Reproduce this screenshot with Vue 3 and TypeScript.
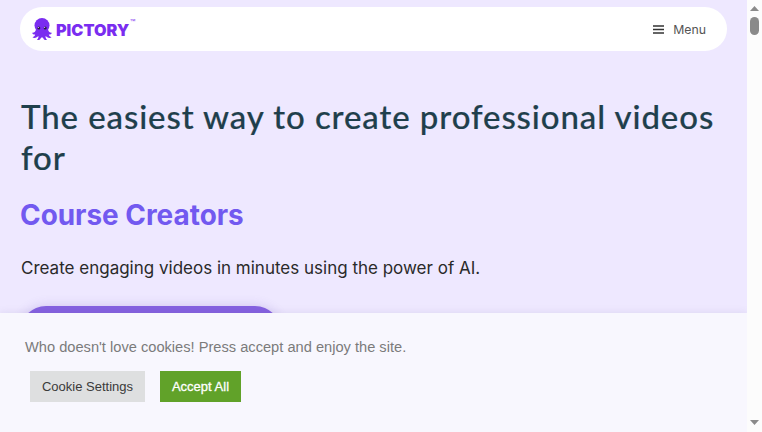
<script setup lang="ts">
const menuLabel = "Menu";
</script>

<template>
  <div class="page">
    <main class="content">
      <header class="navbar">
        <div class="logo">
          <svg class="octopus" viewBox="0 0 20 23" width="20" height="23">
            <circle cx="10" cy="7.500" r="7.500" fill="#7a2df0" />
            <path
              d="M4 11c-.2 2.500-1.500 3.800-3.800 3.700.1 1.200 1.500 2 3 1.700-.3 1.300-1.300 2.300-2.700 2.800.9 1.100 3 1 4.200 0 .8-.7 1.300-1 1.900-1-.1 1.500-.7 2.800-1.700 3.600 1.400.6 3.100-.1 3.700-1.400.3-.7.600-.9 1.400-.9s1.100.2 1.400.9c.6 1.300 2.300 2 3.700 1.400-1-.8-1.600-2.100-1.700-3.600.6 0 1.100.3 1.900 1 1.200 1 3.300 1.100 4.200 0-1.400-.5-2.400-1.500-2.700-2.800 1.500.3 2.900-.5 3-1.700-2.300.1-3.600-1.200-3.800-3.700z"
              fill="#7a2df0"
            />
            <circle cx="6.800" cy="10" r="1.500" fill="#2a1a4a" />
            <circle cx="13.200" cy="10" r="1.500" fill="#2a1a4a" />
            <circle cx="6.300" cy="9.500" r="0.500" fill="#fff" />
            <circle cx="12.700" cy="9.500" r="0.500" fill="#fff" />
          </svg>
          <span class="logo-text">PICTORY</span>
          <span class="logo-tm">™</span>
        </div>
        <button class="menu-button">
          <svg class="menu-icon" viewBox="0 0 11 9" width="11" height="9">
            <path d="M0 1h11M0 4.500h11M0 8h11" stroke="#333" stroke-width="1.500" />
          </svg>
          <span>{{ menuLabel }}</span>
        </button>
      </header>

      <section class="hero">
        <h1>The easiest way to create professional videos for</h1>
        <h2>Course Creators</h2>
        <p>Create engaging videos in minutes using the power of AI.</p>
        <div class="cta" />
      </section>

      <div class="cookie-bar">
        <p>Who doesn't love cookies! Press accept and enjoy the site.</p>
        <div class="cookie-actions">
          <button class="btn-settings">Cookie Settings</button>
          <button class="btn-accept">Accept All</button>
        </div>
      </div>
    </main>

    <aside class="scrollbar">
      <svg class="arrow" viewBox="0 0 9 5" width="9" height="5"><path d="M4.500 0L9 5H0z" fill="#8a8a8a" /></svg>
      <div class="thumb" />
      <svg class="arrow arrow-down" viewBox="0 0 9 5" width="9" height="5"><path d="M0 0h9L4.500 5z" fill="#8a8a8a" /></svg>
    </aside>
  </div>
</template>

<style scoped>
.page {
  display: flex;
  width: 762px;
  height: 432px;
  overflow: hidden;
}

.content {
  position: relative;
  width: 747px;
  height: 432px;
  box-sizing: border-box;
  padding: 7px 20px 0;
  background-color: #eee8ff;
  overflow: hidden;
}

.navbar {
  display: flex;
  justify-content: space-between;
  align-items: center;
  height: 44px;
  padding: 0 21px 0 12px;
  background-color: #fff;
  border-radius: 22px;
}

.logo {
  display: flex;
  align-items: center;
}

.logo-text {
  margin: 2px 0 0 4px;
  font-family: "Inter", sans-serif;
  font-size: 16.200px;
  font-weight: 900;
  line-height: 14px;
  color: #7a2df0;
}

.logo-tm {
  align-self: flex-start;
  font-family: "Liberation Sans", sans-serif;
  font-size: 6px;
  line-height: 6px;
  color: #7a2df0;
}

.menu-button {
  display: flex;
  align-items: center;
  gap: 9px;
  padding: 0;
  border: none;
  background: none;
  font-family: "Inter", sans-serif;
  font-size: 12.300px;
  color: #555;
}

.hero {
  padding: 45px 0 0 1px;
}

h1 {
  margin: 0;
  font-family: "Lato", sans-serif;
  font-size: 33px;
  font-weight: 500;
  line-height: 41px;
  letter-spacing: 0.9px;
  -webkit-text-stroke: 0.2px #1f3f4c;
  color: #1f3f4c;
}

h2 {
  margin: 19px 0 0 -1px;
  font-family: "Inter", sans-serif;
  font-size: 27.900px;
  font-weight: 700;
  line-height: 36px;
  color: #7259f0;
}

.hero p {
  margin: 22px 0 0;
  font-family: "Inter", sans-serif;
  font-size: 17px;
  line-height: 26px;
  color: #2a2a2a;
}

.cta {
  width: 261px;
  height: 52px;
  margin: 25px 0 0 -1px;
  background-color: #8562e0;
  border-radius: 26px;
  box-shadow: 0 0 12px rgba(90, 60, 180, 0.2);
}

.cookie-bar {
  position: absolute;
  left: 0;
  right: 0;
  bottom: 0;
  height: 119px;
  box-sizing: border-box;
  padding: 24px 25px 0;
  background-color: #f8f7fe;
  box-shadow: 0 0 8px rgba(90, 70, 140, 0.12);
  font-family: "Liberation Sans", sans-serif;
}

.cookie-bar p {
  margin: 0;
  font-size: 14.650px;
  line-height: 20px;
  color: #7b7b7b;
}

.cookie-actions {
  display: flex;
  gap: 15px;
  margin: 14px 0 0 5px;
}

.cookie-actions button {
  height: 31px;
  padding: 0;
  border: none;
  font-family: inherit;
  font-size: 13px;
}

.btn-settings {
  width: 115px;
  background-color: #dedfe0;
  color: #3a3a3a;
}

.btn-accept {
  width: 81px;
  background-color: #61a229;
  color: #fff;
  -webkit-text-stroke: 0.3px #fff;
}

.scrollbar {
  display: flex;
  flex-direction: column;
  align-items: center;
  width: 15px;
  height: 432px;
  box-sizing: border-box;
  padding-top: 6px;
  background-color: #fcfcfc;
}

.thumb {
  width: 9px;
  height: 18px;
  margin-top: 6px;
  background-color: #8a8a8a;
  border-radius: 5px;
}

.arrow-down {
  margin-top: auto;
  margin-bottom: 7px;
}
</style>

<style>
html,
body {
  margin: 0;
  overflow: hidden;
}
</style>
